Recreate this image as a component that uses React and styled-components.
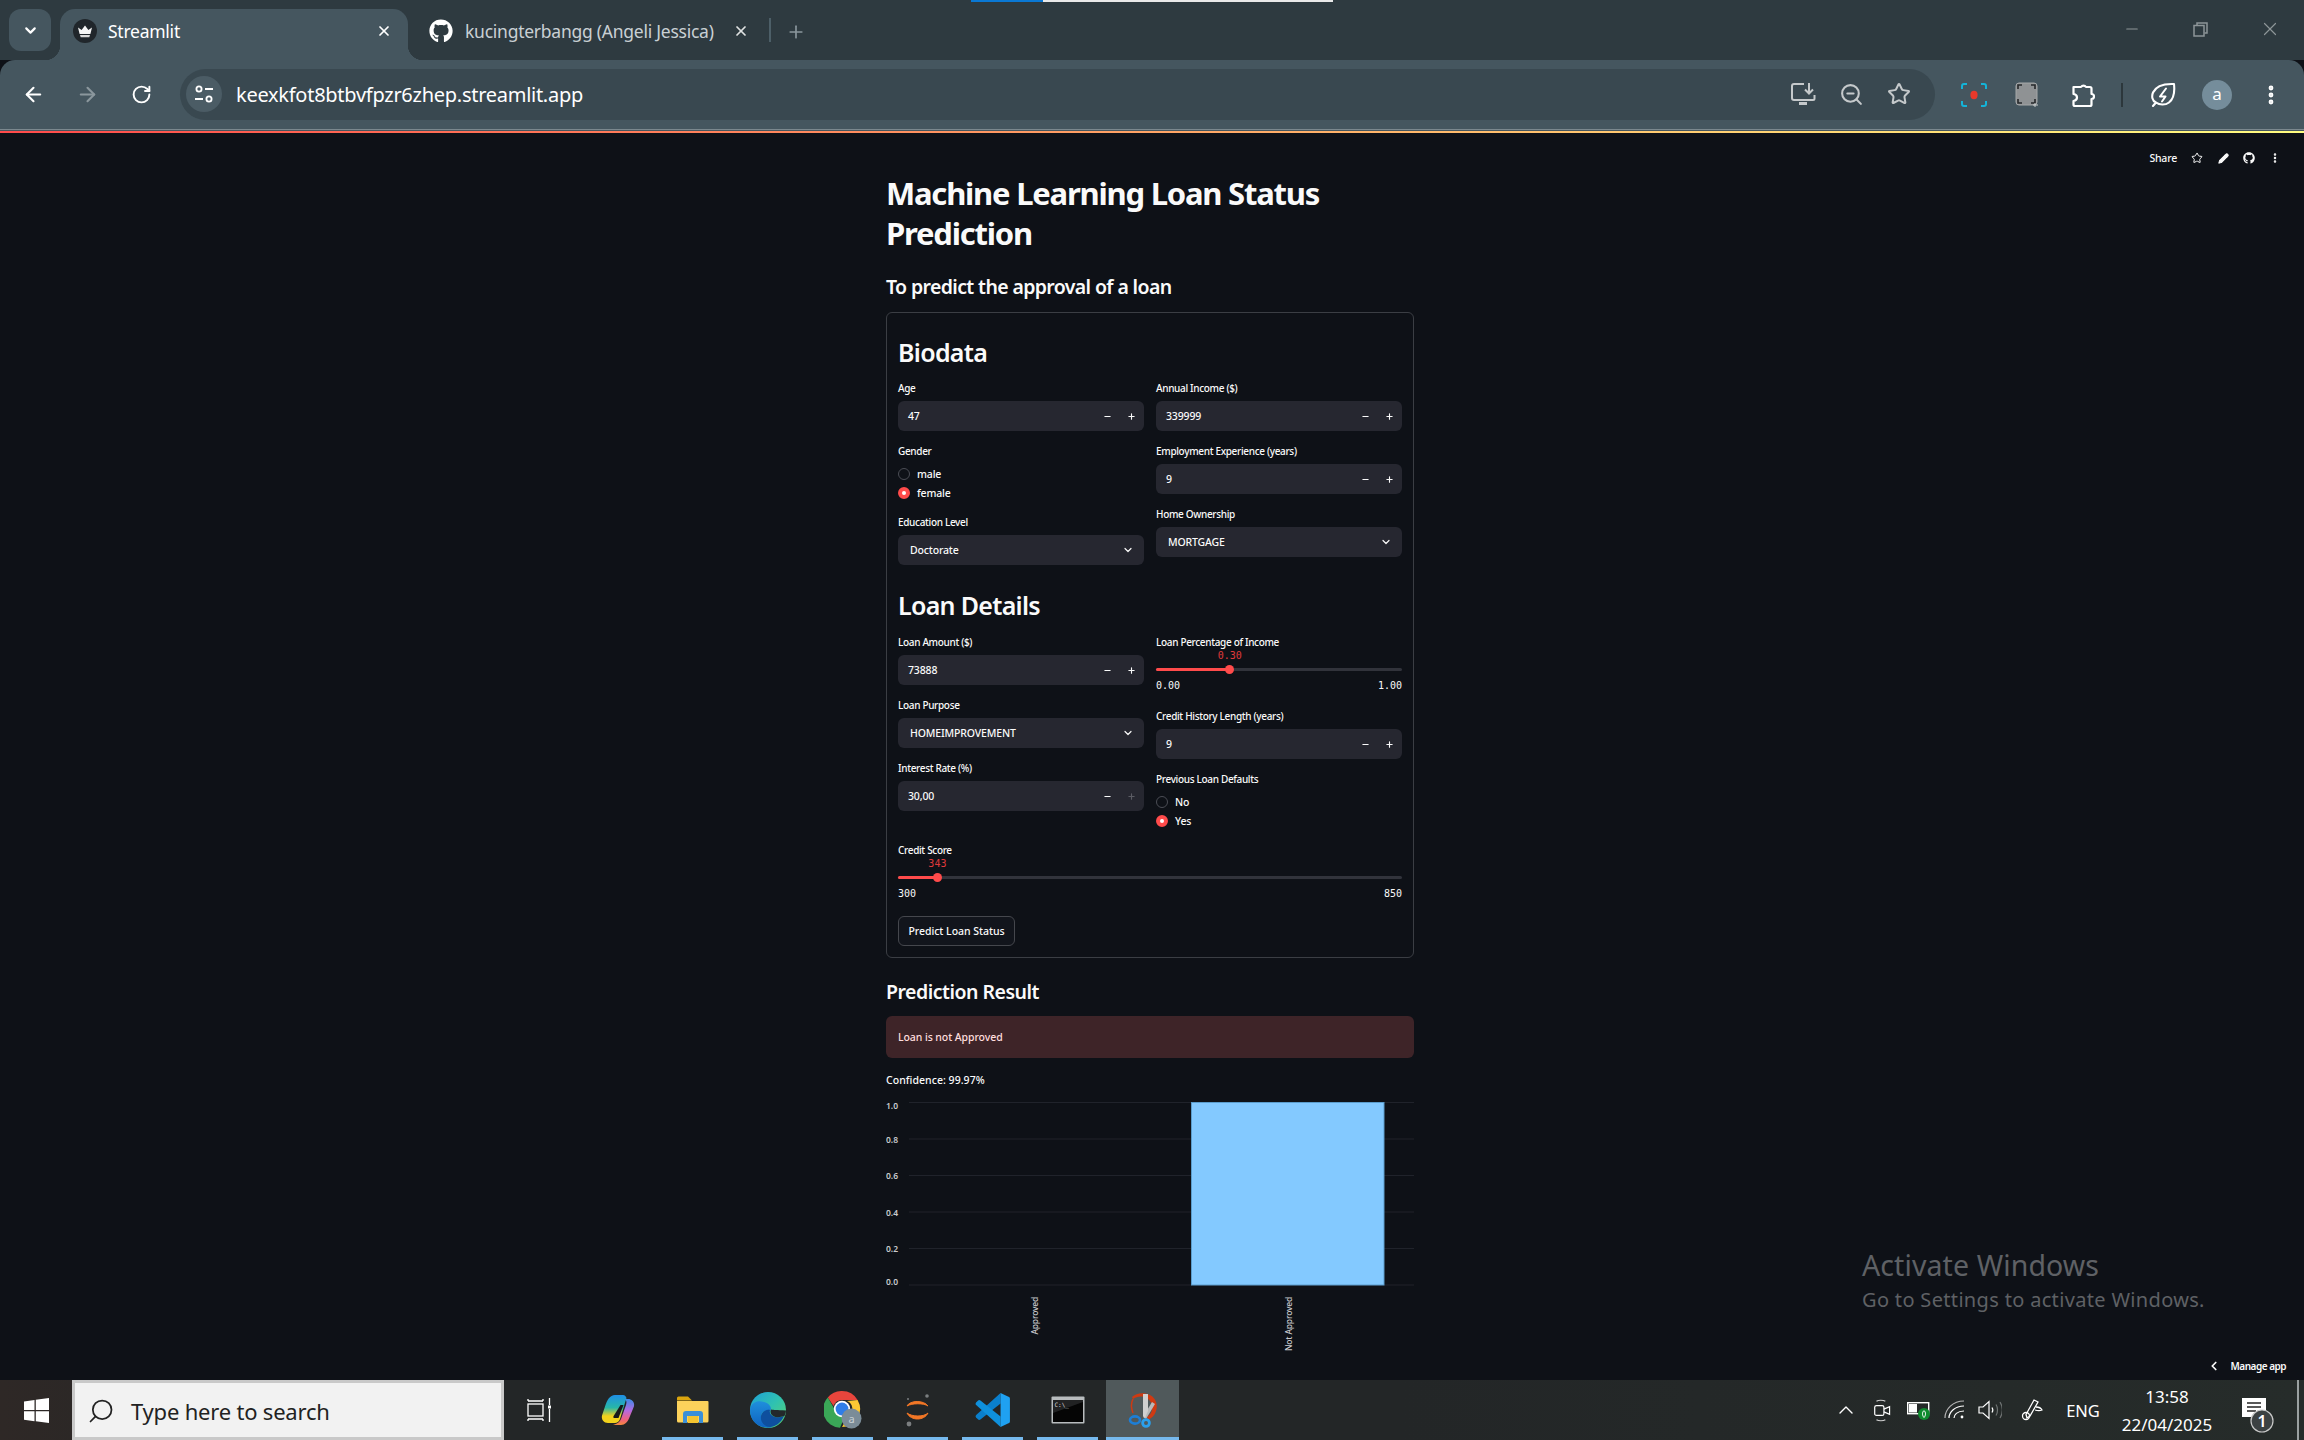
import React from 'react';
import styled, { createGlobalStyle } from 'styled-components';
import { ArrowLeft, ArrowRight, RotateCw, Star, ZoomOut, X, Plus, Minus, ChevronDown, ChevronLeft, ChevronUp, Pencil, EllipsisVertical, Search } from 'lucide-react';
import { FaGithub } from 'react-icons/fa';

const GlobalStyle = createGlobalStyle`
  html, body { margin: 0; padding: 0; background: #0e1117; }
  * { box-sizing: border-box; }
  #root { width: 2304px; height: 1440px; overflow: hidden; }
`;

const UI_FONT = `"Noto Sans", "Open Sans", sans-serif`;
const APP_FONT = `"Noto Sans", "Open Sans", sans-serif`;
const MONO_FONT = `"DejaVu Sans Mono", "Liberation Mono", monospace`;

const Shell = styled.div`
  position: relative;
  width: 2304px;
  height: 1440px;
  display: flex;
  flex-direction: column;
  font-family: ${UI_FONT};
`;

const CaptureBar = styled.div`
  position: absolute;
  top: 0;
  left: 971px;
  width: 362px;
  height: 2px;
  background: linear-gradient(90deg, #0a78d4 0 72px, #e9e9e9 72px);
`;

/* browser chrome */
const TabStrip = styled.div`
  height: 60px;
  background: #2e3a40;
  display: flex;
  align-items: flex-end;
  padding-left: 9px;
`;

const TabSearch = styled.div`
  width: 42px;
  height: 42px;
  margin-bottom: 9px;
  margin-right: 9px;
  border-radius: 12px;
  background: #45565f;
  color: #fff;
  display: flex;
  align-items: center;
  justify-content: center;
`;

const Tab = styled.div`
  position: relative;
  width: ${p => p.$w}px;
  height: 51px;
  padding: 0 ${p => p.$right}px 8px ${p => p.$left}px;
  display: flex;
  align-items: center;
  gap: ${p => p.$gap}px;
  font-size: 17.5px;
  letter-spacing: -0.25px;
  color: ${p => (p.$active ? '#fff' : '#c9d0d4')};
  background: ${p => (p.$active ? '#45565f' : 'transparent')};
  border-radius: 15px 15px 0 0;

  ${p => p.$active && `
    &::before, &::after {
      content: '';
      position: absolute;
      bottom: 0;
      width: 15px;
      height: 15px;
    }
    &::before { left: -15px; background: radial-gradient(circle at 0 0, transparent 15px, #45565f 15.5px); }
    &::after { right: -15px; background: radial-gradient(circle at 100% 0, transparent 15px, #45565f 15.5px); }
  `}
`;

const TabTitle = styled.span`
  flex: 1;
  white-space: nowrap;
`;

const TabClose = styled.span`
  display: flex;
  color: #fff;
  opacity: ${p => (p.$dim ? 0.85 : 1)};
`;

const TabDivider = styled.div`
  width: 2px;
  height: 24px;
  margin-bottom: 18px;
  background: #4d5f68;
`;

const NewTab = styled.div`
  width: 50px;
  margin-bottom: 18px;
  display: flex;
  justify-content: center;
  color: #8a969c;
`;

const WindowControls = styled.div`
  margin-left: auto;
  display: flex;
  align-self: flex-start;
  color: #8d9598;
`;

const WindowButton = styled.div`
  width: 69px;
  height: 58px;
  display: flex;
  align-items: center;
  justify-content: center;
`;

const Toolbar = styled.div`
  height: 70px;
  background: #45565f;
  border-bottom: 1px solid #7b888e;
  border-radius: 15px 15px 0 0;
  padding-left: 6px;
  display: flex;
  align-items: center;
  color: #fff;
`;

const Decoration = styled.div`
  height: 3px;
  border-top: 1px solid #45565f;
  background: linear-gradient(90deg, #ff4b4b, #fffd80);
`;

const NavButton = styled.div`
  width: ${p => p.$w || 54}px;
  height: 50px;
  flex: none;
  display: flex;
  align-items: center;
  justify-content: center;
  color: ${p => (p.$dim ? '#8b979d' : '#fff')};
`;

const Omnibox = styled.div`
  width: 1755px;
  height: 51px;
  margin: 0 12px 1px 12px;
  padding: 0 12px 0 6px;
  border-radius: 26px;
  background: #394850;
  display: flex;
  align-items: center;
  flex: none;
`;

const SiteInfo = styled.div`
  width: 36px;
  height: 36px;
  border-radius: 50%;
  background: #4b5c65;
  display: flex;
  align-items: center;
  justify-content: center;
`;

const UrlText = styled.span`
  margin-left: 14px;
  flex: 1;
  font-size: 20px;
  letter-spacing: -0.27px;
  color: #fff;
`;

const OmniAction = styled.div`
  width: 48px;
  display: flex;
  justify-content: center;
  color: #c5c9cb;
`;

const ToolbarRule = styled.div`
  width: 2px;
  height: 24px;
  margin: 0 13px 0 12px;
  background: #2c373c;
`;

const Avatar = styled.div`
  width: 30px;
  height: 30px;
  border-radius: 50%;
  background: #758d9b;
  color: #fff;
  font-size: 17px;
  line-height: 28px;
  text-align: center;
`;

/* streamlit page */
const Page = styled.main`
  position: relative;
  flex: 1;
  min-height: 0;
  overflow: hidden;
  background: #0e1117;
  padding: 40px 4px 0 0;
  font-family: ${APP_FONT};
  color: #fafafa;
`;

const Column = styled.div`
  width: 528px;
  margin: 0 auto;
`;

const Title = styled.h1`
  margin: 0;
  font-size: 31px;
  line-height: 40px;
  font-weight: 700;
  letter-spacing: -1.22px;
`;

const Subtitle = styled.h3`
  margin: 21px 0 12px;
  font-size: 19.5px;
  line-height: 26px;
  font-weight: 600;
  letter-spacing: -0.63px;
`;

const Card = styled.div`
  border: 1px solid #3b3e44;
  border-radius: 6px;
  padding: 11px;
  display: flex;
  flex-direction: column;
  gap: 12px;
`;

const SectionHeading = styled.h2`
  margin: ${p => (p.$nudge ? '1px' : '0')} 0 0;
  height: 44px;
  padding-top: ${p => (p.$nudge ? 11 : 12)}px;
  font-size: 25px;
  line-height: 32px;
  font-weight: 600;
  letter-spacing: -0.7px;
`;

const FieldGrid = styled.div`
  display: grid;
  grid-template-columns: 246px 246px;
  gap: 12px;
  align-items: start;
`;

const FieldStack = styled.div`
  display: flex;
  flex-direction: column;
  gap: 12px;
`;

const FieldLabel = styled.div`
  height: 18px;
  margin-bottom: 3px;
  font-size: 10px;
  font-weight: 500;
  line-height: 16px;
  letter-spacing: -0.33px;
  color: #fafafa;
  white-space: nowrap;
`;

const Control = styled.div`
  height: 30px;
  padding-right: 1px;
  border-radius: 6px;
  background: #262730;
  display: flex;
  align-items: center;
  font-size: 10.5px;
  font-weight: 500;
  letter-spacing: -0.15px;
  color: #fafafa;
`;

const NumberValue = styled.span`
  flex: 1;
  padding-left: 10px;
`;

const Stepper = styled.span`
  width: 24px;
  display: flex;
  justify-content: center;
  color: ${p => (p.$off ? '#5b5c64' : '#fafafa')};
`;

const SelectValue = styled.span`
  flex: 1;
  padding-left: 12px;
`;

const SelectArrow = styled.span`
  width: 27px;
  display: flex;
  justify-content: center;
  padding-right: 3px;
`;

const RadioRow = styled.div`
  height: 19px;
  padding-top: 1px;
  display: flex;
  align-items: center;
  gap: 7px;
  font-size: 10.5px;
  font-weight: 500;
  letter-spacing: -0.15px;
`;

const RadioDot = styled.span`
  width: 12px;
  height: 12px;
  margin-top: -1px;
  border-radius: 50%;
  background: ${p => (p.$on ? '#ff4b4b' : '#0e1117')};
  border: ${p => (p.$on ? '4px solid #ff4b4b' : '1px solid #4b4d55')};
  display: block;
  position: relative;

  ${p => p.$on && `
    &::after {
      content: '';
      position: absolute;
      inset: 0;
      border-radius: 50%;
      background: #fff;
    }
  `}
`;

const SliderBlock = styled.div`
  height: 62px;
`;

const Rail = styled.div`
  position: relative;
  height: 3px;
  margin-top: 16px;
  border-radius: 2px;
  background: #31333b;
`;

const RailFill = styled.div`
  height: 100%;
  border-radius: 2px;
  background: #ff4b4b;
`;

const Thumb = styled.div`
  position: absolute;
  top: -3px;
  width: 9px;
  height: 9px;
  margin-left: -4.5px;
  border-radius: 50%;
  background: #ff4b4b;
`;

const ThumbValue = styled.div`
  position: absolute;
  top: -19px;
  transform: translateX(-50%);
  font-family: ${MONO_FONT};
  font-size: 10px;
  line-height: 14px;
  color: #e03a3c;
`;

const TickRow = styled.div`
  display: flex;
  justify-content: space-between;
  margin-top: 8px;
  font-family: ${MONO_FONT};
  font-size: 10px;
  line-height: 14px;
  color: #fafafa;
`;

const PredictButton = styled.button`
  align-self: flex-start;
  width: 117px;
  height: 30px;
  padding: 0;
  border: 1px solid #45474d;
  border-radius: 6px;
  background: #12151c;
  color: #fafafa;
  font-family: ${APP_FONT};
  font-size: 10.5px;
  font-weight: 500;
  letter-spacing: -0.03px;
`;

const ResultHeading = styled.h3`
  margin: 21px 0 11px;
  font-size: 19.5px;
  line-height: 26px;
  font-weight: 600;
  letter-spacing: -0.5px;
`;

const ErrorAlert = styled.div`
  height: 42px;
  padding-left: 12px;
  border-radius: 6px;
  background: #3e2428;
  color: #ffdede;
  display: flex;
  align-items: center;
  font-size: 10.5px;
  font-weight: 500;
  letter-spacing: -0.08px;
`;

const Confidence = styled.p`
  margin: 14px 0 0;
  font-size: 10.5px;
  font-weight: 500;
  line-height: 16px;
  letter-spacing: 0.04px;
`;

const ChartFrame = styled.svg`
  display: block;
  width: 528px;
  height: 268px;
  margin-top: 4px;
  font-family: ${APP_FONT};
`;

const ViewerBadge = styled.div`
  position: absolute;
  top: 18px;
  right: 16px;
  height: 14px;
  display: flex;
  align-items: center;
  font-size: 10.5px;
  letter-spacing: -0.2px;
  font-weight: 500;
  color: #fafafa;
`;

const BadgeIcon = styled.span`
  width: 26px;
  display: flex;
  justify-content: center;
  margin-left: ${p => p.$first ? 7 : 0}px;
`;

const ManageApp = styled.div`
  position: absolute;
  right: 18px;
  bottom: 7px;
  display: flex;
  align-items: center;
  gap: 10px;
  font-size: 10px;
  font-weight: 600;
  letter-spacing: -0.5px;
  color: #fafafa;
`;

const Watermark = styled.div`
  position: absolute;
  left: 1862px;
  top: 1114px;
  color: #5f6165;
`;

const WatermarkTitle = styled.div`
  font-size: 28.5px;
  line-height: 36px;
  letter-spacing: 0.1px;
`;

const WatermarkNote = styled.div`
  font-size: 20px;
  line-height: 33px;
  letter-spacing: 0.33px;
`;

/* windows taskbar */
const Taskbar = styled.footer`
  height: 60px;
  display: flex;
  background: linear-gradient(90deg, #2e2826 0, #232627 400px, #232627 1400px, #262c2a 2304px);
  color: #fff;
`;

const StartButton = styled.div`
  width: 72px;
  display: flex;
  align-items: center;
  justify-content: center;
`;

const SearchBox = styled.div`
  width: 432px;
  display: flex;
  align-items: center;
  gap: 16px;
  padding: 2px 0 0 12px;
  background: #f2f2f2;
  border: 3px solid #c9c9c9;
  color: #222;
  font-size: 22px;
  letter-spacing: -0.2px;
`;

const TaskViewCell = styled.div`
  width: 76px;
  padding-right: 6px;
  display: flex;
  align-items: center;
  justify-content: center;
`;

const AppCell = styled.div`
  position: relative;
  width: 75px;
  display: flex;
  align-items: center;
  justify-content: center;
  padding-bottom: 1px;

  ${p => p.$active && `
    &::before {
      content: '';
      position: absolute;
      inset: 0 1px;
      background: #50595b;
    }
  `}

  ${p => p.$open && `
    &::after {
      content: '';
      position: absolute;
      bottom: 0;
      left: ${p.$active ? 1 : 7}px;
      right: ${p.$active ? 1 : 7}px;
      height: 3px;
      background: #76b9ed;
    }
  `}

  & > svg { position: relative; z-index: 1; }
`;

const Tray = styled.div`
  margin-left: auto;
  display: flex;
  height: 100%;
`;

const TrayCell = styled.div`
  width: ${p => p.$w}px;
  display: flex;
  align-items: center;
  justify-content: center;
  font-size: ${p => p.$fs || 16}px;
`;

const Clock = styled.div`
  width: 116px;
  text-align: center;
  font-size: 17px;
  line-height: 28px;
  padding-top: 3px;
`;

const ShowDesktop = styled.div`
  width: 19px;
  display: flex;
  justify-content: flex-end;
  padding-right: 5px;

  &::after {
    content: '';
    width: 2px;
    height: 100%;
    background: #9aa0a0;
  }
`;

/* drawn icons */
const CrownIcon = () => (
  <svg width="24" height="24" viewBox="0 0 24 24">
    <circle cx="12" cy="12" r="12" fill="#20262b" />
    <path d="M5 8.5l3.6 2.6L12 6.5l3.4 4.6L19 8.5l-1.6 6.5H6.6z" fill="#f6f6f6" />
    <path d="M7 16h10l-.7 2.2H7.7z" fill="#d9d9d9" />
  </svg>
);

const SiteTuneIcon = () => (
  <svg width="22" height="22" viewBox="0 0 22 22" fill="none" stroke="#fff" strokeWidth="1.8">
    <circle cx="6" cy="6" r="2.6" />
    <path d="M12 6h8M2 16h8" />
    <circle cx="16" cy="16" r="2.6" />
  </svg>
);

const InstallIcon = () => (
  <svg width="26" height="24" viewBox="0 0 26 24" fill="none" stroke="#c5c9cb" strokeWidth="2">
    <path d="M14 2H4a2 2 0 0 0-2 2v12a2 2 0 0 0 2 2h19a1.5 1.5 0 0 0 1.5-1.5V13" />
    <path d="M9 21.5h8" strokeWidth="3" />
    <path d="M19 1v10M15 7.5l4 4 4-4" />
  </svg>
);

const RecordIcon = () => (
  <svg width="26" height="24" viewBox="0 0 26 24" fill="none" stroke="#14b4d8" strokeWidth="2">
    <path d="M1 6V3a2 2 0 0 1 2-2h3M20 1h3a2 2 0 0 1 2 2v3M25 18v3a2 2 0 0 1-2 2h-3M6 23H3a2 2 0 0 1-2-2v-3" />
    <ellipse cx="13" cy="12" rx="3.6" ry="4.2" fill="#e8392b" stroke="none" />
  </svg>
);

const CaptureIcon = () => (
  <svg width="26" height="26" viewBox="0 0 26 26">
    <rect x="1" y="1" width="21" height="22" rx="3" fill="#8f9294" stroke="#a5a7a8" />
    <path d="M3 7V3h4M16 3h4v4M20 17v4h-4M7 21H3v-4" fill="none" stroke="#26292b" strokeWidth="1.6" />
    <path d="M20 21v4M18 23h5" stroke="#c9cccd" strokeWidth="1" />
  </svg>
);

const PuzzleIcon = () => (
  <svg width="26" height="26" viewBox="-2 0 26 26" fill="none" stroke="#fff" strokeWidth="2.2" strokeLinejoin="round">
    <path d="M2.500 5H10a3 3 0 0 1 5 0h4a1.500 1.500 0 0 1 1.500 1.500V12a2.500 2.500 0 0 1 0 5v5.500A1.500 1.500 0 0 1 19 24H4a1.500 1.500 0 0 1-1.500-1.500V19c3-.6 3.500-2 3.500-3.500S5.500 12.500 2.500 12z" />
  </svg>
);

const LeafBoltIcon = () => (
  <svg width="26" height="26" viewBox="0 0 26 26" fill="none" stroke="#fff" strokeWidth="2.100" strokeLinejoin="round" strokeLinecap="round">
    <path d="M6 20.500C2 19 1.500 14 3 10.500 5.500 5 13 1.500 24 2c1 9-.5 15-5 18.500-4 3-9.500 2.500-13 0-1 1-2 2.500-3 3.500" />
    <path d="M16 6.500l-6 8h5.500l-3.500 5" strokeWidth="2" />
  </svg>
);

const WindowsLogo = () => (
  <svg width="25" height="25" viewBox="0 0 25 25" fill="#fff">
    <path d="M0 3.500l10.500-1.500v10H0zM11.800 1.800L25 0v12H11.800zM0 13.200h10.500v10L0 21.700zM11.800 13.200H25V25l-13.200-1.800z" />
  </svg>
);

const TaskViewIcon = () => (
  <svg width="24" height="24" viewBox="0 0 24 24" fill="none" stroke="#fff" strokeWidth="1.300">
    <path d="M1 3h15M1 1v2M16 1v2M1 21h15M1 23v-2M16 23v-2" />
    <rect x="1" y="6" width="15" height="12" />
    <path d="M22.500 0v7M22.500 11v13" />
    <rect x="21" y="7.500" width="3" height="3" fill="#fff" stroke="none" />
  </svg>
);

const CopilotIcon = () => (
  <svg width="34" height="32" viewBox="0 0 34 32">
    <defs>
      <linearGradient id="copL" x1="0" y1="0" x2="0" y2="1">
        <stop offset="0" stopColor="#1f8fe6" />
        <stop offset=".45" stopColor="#27b7a8" />
        <stop offset=".75" stopColor="#f2d21c" />
      </linearGradient>
      <linearGradient id="copR" x1="0" y1="0" x2="0" y2="1">
        <stop offset="0" stopColor="#3a8ce8" />
        <stop offset=".45" stopColor="#b56ae0" />
        <stop offset=".8" stopColor="#f0627a" />
        <stop offset="1" stopColor="#f48a3c" />
      </linearGradient>
    </defs>
    <path d="M14 1h8c2 0 3 1.500 3.500 3L19 25c-.8 2.500-3 4-5 4H7c-4 0-7-3.500-6-7.500l3-9C6 6 9 1 14 1z" fill="url(#copL)" />
    <path d="M12 31h8c4 0 6.500-3 8-6.500l4.500-11C34.500 9 31.500 5 27 5h-3c2 2 1.500 4 1 6l-5 14c-1 3-4 5-8 6z" fill="url(#copR)" />
    <path d="M19.500 11h3l-5 13h-4c-1 0-1.500-.8-1-1.800z" fill="#17191b" />
  </svg>
);

const FolderIcon = () => (
  <svg width="32" height="28" viewBox="0 0 32 28">
    <path d="M0 2a1.500 1.500 0 0 1 1.500-1.500H11l4 4h-15z" fill="#dba50e" />
    <path d="M0 5h30.500a1 1 0 0 1 1 1v19a1.500 1.500 0 0 1-1.500 1.500H1.500A1.500 1.500 0 0 1 0 25z" fill="#fcd25b" />
    <path d="M6 27v-9a3 3 0 0 1 3-3h14a3 3 0 0 1 3 3v9h-4v-7H10v7z" fill="#3a8fd8" />
    <rect x="11" y="20" width="10" height="7" fill="#f4c430" />
  </svg>
);

const EdgeIcon = () => (
  <svg width="36" height="36" viewBox="0 0 36 36">
    <defs>
      <linearGradient id="edgeA" x1="0" y1="0" x2="1" y2="1">
        <stop offset="0" stopColor="#1d9fd8" />
        <stop offset=".5" stopColor="#30c2b0" />
        <stop offset="1" stopColor="#5ed468" />
      </linearGradient>
      <linearGradient id="edgeB" x1="0" y1="0" x2="0" y2="1">
        <stop offset="0" stopColor="#1f8fdc" />
        <stop offset="1" stopColor="#0f62c0" />
      </linearGradient>
    </defs>
    <circle cx="18" cy="18" r="18" fill="url(#edgeA)" />
    <path d="M0 18C1 10 8 8 14 10c7 2 8 7 6 9-4-1-9 0-9 6 0 4 4 9 12 10C10 38 0 30 0 18z" fill="url(#edgeB)" />
    <path d="M20 18c-1 3 1 6 5 7 3 .6 6 0 9-1-3 7-9 11-14 11-6-1-10-5-9-11 1-5 6-7 9-6z" fill="#0e4f9e" />
    <path d="M21 17.500c3 .5 5 .5 15 1-.2 2-.6 3.500-1.500 5.500-3 1-6 1.500-9 1-4-1-6-4.500-4.500-7.500z" fill="#23282a" />
  </svg>
);

const ChromeIcon = () => (
  <svg width="38" height="38" viewBox="0 0 38 38">
    <path d="M18 0a18 18 0 0 1 15.600 9H18a9 9 0 0 0-8.500 6L3.800 6.500A18 18 0 0 1 18 0z" fill="#e8453c" />
    <path d="M3.800 6.500 L11 19a8 8 0 0 0 10 6l-5 11.800A18 18 0 0 1 3.800 6.500z" fill="#3aa757" />
    <path d="M33.600 9A18 18 0 0 1 18 36l7-12a8 8 0 0 0-2-14z" fill="#fcc934" />
    <circle cx="18" cy="18" r="8.200" fill="#fff" />
    <circle cx="18" cy="18" r="6.400" fill="#2f7de8" />
    <circle cx="27.500" cy="27.500" r="10" fill="#7b8c98" />
    <text x="27.500" y="31.500" textAnchor="middle" fontSize="11" fill="#c8d0d5" fontFamily={UI_FONT}>a</text>
  </svg>
);

const JupyterIcon = () => (
  <svg width="28" height="34" viewBox="0 0 28 34">
    <path d="M3 13C6 7 20 7 24 13 20 10 8 10 3 13z" fill="#f37726" stroke="#f37726" />
    <path d="M3 20C8 24 20 24 24 20 20 28 7 28 3 20z" fill="#f37726" stroke="#f37726" />
    <circle cx="23" cy="3" r="1.800" fill="#7b7e80" />
    <circle cx="5" cy="31" r="2.400" fill="#7b7e80" />
    <circle cx="4" cy="6" r="1" fill="#7b7e80" />
  </svg>
);

const VsCodeIcon = () => (
  <svg width="36" height="36" viewBox="0 0 100 100">
    <path d="M71 3 4 63c-3 3-3 5-1 8l5 5c2 2 5 2 8 0L71 32z" fill="#0a7fcc" />
    <path d="M71 97 4 37c-3-3-3-5-1-8l5-5c2-2 5-2 8 0L71 68z" fill="#0f90dc" />
    <path d="M71 3l22 10c3 1 4 3 4 6v62c0 3-1 5-4 6L71 97z" fill="#1fa1f1" />
  </svg>
);

const TerminalIcon = () => (
  <svg width="34" height="28" viewBox="0 0 34 28">
    <rect x="0.500" y="0.500" width="33" height="27" rx="1" fill="#b8bcbe" />
    <rect x="2" y="4" width="30" height="22" fill="#050505" />
    <path d="M2 17L32 6V4H2z" fill="#2d2f31" opacity=".7" />
    <text x="3.500" y="11" fontSize="6" fill="#d8d8d8" fontFamily={MONO_FONT}>C:\_</text>
  </svg>
);

const SnipIcon = () => (
  <svg width="30" height="36" viewBox="0 0 30 36">
    <path d="M4 5C8 1 16 0 22 3c6 3 8 10 6 16-1 4-4 7-8 9l-1-3c3-2 5-5 5-8 1-6-3-11-8-12-4-1-8 0-11 2z" fill="#cf3a12" />
    <path d="M5 7C3 11 3 16 5 21" fill="none" stroke="#cf3a12" strokeWidth="1.500" />
    <path d="M27 12l-9 15-3-2 9-15z" fill="#b9b9b9" />
    <path d="M15 2h5v17l-3 7-2-2z" fill="#d0d0d0" />
    <ellipse cx="7" cy="28" rx="5" ry="3.600" fill="none" stroke="#1d7ed6" strokeWidth="2.600" />
    <circle cx="18" cy="31" r="3.400" fill="none" stroke="#2ba0ec" strokeWidth="2.800" />
  </svg>
);

const MeetIcon = () => (
  <svg width="17" height="23" viewBox="0 0 24 32" fill="none" stroke="#fff" strokeWidth="1.700">
    <rect x="1" y="9" width="13" height="14" rx="2.500" />
    <path d="M14 14l8-3.500v11L14 18" />
    <path d="M3.500 3C6 1 13 1 16 3M3.500 29c3 2 9.500 2 12.500 0" stroke="#cfcfcf" />
  </svg>
);

const BatteryIcon = () => (
  <svg width="24" height="20" viewBox="0 0 24 20">
    <rect x="0.700" y="2.700" width="21" height="11" fill="none" stroke="#fff" strokeWidth="1.400" />
    <rect x="2" y="4" width="8" height="8.500" fill="#fff" />
    <circle cx="17" cy="14" r="6" fill="#0f8a2e" />
    <path d="M17 10.500c2 1.500 2 5 0 7-2-2-2-5.500 0-7z" fill="none" stroke="#fff" strokeWidth="1" />
  </svg>
);

const WifiIcon = () => (
  <svg width="22" height="20" viewBox="0 0 22 20" fill="none" stroke="#fff" strokeWidth="1.200">
    <path d="M1 18C1 9 9 1 20 1" stroke="#b5b5b5" />
    <path d="M5 18c0-6 6-12 15-12" />
    <path d="M10 18c0-3 3-7 10-7" />
    <circle cx="18" cy="17" r="1.400" fill="#fff" stroke="none" />
  </svg>
);

const VolumeIcon = () => (
  <svg width="24" height="20" viewBox="0 0 24 20" fill="none" stroke="#fff" strokeWidth="1.200">
    <path d="M1 7v6h4l6 5.500V1.500L5 7z" />
    <path d="M14 7.500c1 1.500 1 3.500 0 5" />
    <path d="M18 4.500c2 3 2 8 0 11M22 2c3 5 3 11 0 16" stroke="#6f7373" />
  </svg>
);

const PenIcon = () => (
  <svg width="22" height="22" viewBox="0 0 22 22" fill="none" stroke="#fff" strokeWidth="1.300">
    <path d="M13 1l4 2-8 14-3 2-1-3.500z" />
    <circle cx="5" cy="17" r="3.500" />
    <path d="M15 8c3 0 5 1 6 3-2 1-4 1-7 0" />
  </svg>
);

const NoticeIcon = () => (
  <svg width="38" height="46" viewBox="0 0 38 46">
    <path d="M6 11h24v19H19l-3 3v-3H6z" fill="#fff" />
    <path d="M11 16h14M11 20h14M11 24h9" stroke="#222" strokeWidth="1.300" />
    <circle cx="26" cy="34" r="11" fill="#3c4142" stroke="#c9c9c9" strokeWidth="1.200" />
    <text x="26" y="40" textAnchor="middle" fontSize="16" fontWeight="600" fill="#fff" fontFamily={UI_FONT}>1</text>
  </svg>
);

const NumberField = ({ label, value, plusOff }) => (
  <div>
    <FieldLabel>{label}</FieldLabel>
    <Control>
      <NumberValue>{value}</NumberValue>
      <Stepper><Minus size={9} strokeWidth={3} /></Stepper>
      <Stepper $off={plusOff}><Plus size={9} strokeWidth={3} /></Stepper>
    </Control>
  </div>
);

const SelectField = ({ label, value }) => (
  <div>
    <FieldLabel>{label}</FieldLabel>
    <Control>
      <SelectValue>{value}</SelectValue>
      <SelectArrow><ChevronDown size={12} strokeWidth={2.4} /></SelectArrow>
    </Control>
  </div>
);

const RadioField = ({ label, options, selected }) => (
  <div>
    <FieldLabel>{label}</FieldLabel>
    {options.map(o => (
      <RadioRow key={o}>
        <RadioDot $on={o === selected} />
        {o}
      </RadioRow>
    ))}
  </div>
);

const SliderField = ({ label, min, max, value, format }) => {
  const pct = ((value - min) / (max - min)) * 100;
  return (
    <SliderBlock>
      <FieldLabel>{label}</FieldLabel>
      <Rail>
        <RailFill style={{ width: `${pct}%` }} />
        <Thumb style={{ left: `${pct}%` }} />
        <ThumbValue style={{ left: `${pct}%` }}>{format(value)}</ThumbValue>
      </Rail>
      <TickRow>
        <span>{format(min)}</span>
        <span>{format(max)}</span>
      </TickRow>
    </SliderBlock>
  );
};

const ticks = [
  { label: '1.0', y: 10.5, text: 14 },
  { label: '0.8', y: 47, text: 47.5 },
  { label: '0.6', y: 83.5, text: 84 },
  { label: '0.4', y: 120, text: 120.5 },
  { label: '0.2', y: 156.5, text: 157 },
  { label: '0.0', y: 193, text: 189.5 },
];

const LoanChart = () => (
  <ChartFrame viewBox="0 0 528 268">
    {ticks.map(t => (
      <g key={t.label}>
        <line x1="23" x2="528" y1={t.y} y2={t.y} stroke="#20232b" strokeWidth="1" />
        <text x="0" y={t.text + 3} fontSize="8.500" fontWeight="600" fill="#c9cace">{t.label}</text>
      </g>
    ))}
    <rect x="305.500" y="10.500" width="192.500" height="182.500" fill="#83c9ff" stroke="#5a9ccc" strokeWidth="1" />
    <text transform="translate(152 205) rotate(-90)" textAnchor="end" fontSize="8.500" fontWeight="500" fill="#c9cace" letterSpacing="-0.2">Approved</text>
    <text transform="translate(405.500 205) rotate(-90)" textAnchor="end" fontSize="8.500" fontWeight="500" fill="#c9cace" letterSpacing="-0.2">Not Approved</text>
  </ChartFrame>
);

const App = () => (
  <Shell>
    <GlobalStyle />
    <CaptureBar />
    <TabStrip>
      <TabSearch><ChevronDown size={17} strokeWidth={3} /></TabSearch>
      <Tab $active $w={348} $left={13} $right={16} $gap={11}>
        <CrownIcon />
        <TabTitle>Streamlit</TabTitle>
        <TabClose><X size={16} strokeWidth={2.6} /></TabClose>
      </Tab>
      <Tab $w={361} $left={21} $right={20} $gap={12}>
        <FaGithub size={24} color="#fff" />
        <TabTitle>kucingterbangg (Angeli Jessica)</TabTitle>
        <TabClose $dim><X size={16} strokeWidth={2.6} /></TabClose>
      </Tab>
      <TabDivider />
      <NewTab><Plus size={20} strokeWidth={2} /></NewTab>
      <WindowControls>
        <WindowButton><Minus size={18} strokeWidth={1.5} /></WindowButton>
        <WindowButton>
          <svg width="15" height="15" viewBox="0 0 15 15" fill="none" stroke="currentColor" strokeWidth="1.500">
            <rect x="1" y="3.500" width="10" height="10.500" />
            <path d="M4 3V1h10v10h-2.500" />
          </svg>
        </WindowButton>
        <WindowButton><X size={22} strokeWidth={1.3} /></WindowButton>
      </WindowControls>
    </TabStrip>
    <Toolbar>
      <NavButton><ArrowLeft size={23} strokeWidth={2.2} /></NavButton>
      <NavButton $dim><ArrowRight size={23} strokeWidth={2.2} /></NavButton>
      <NavButton><RotateCw size={21} strokeWidth={2.2} /></NavButton>
      <Omnibox>
        <SiteInfo><SiteTuneIcon /></SiteInfo>
        <UrlText>keexkfot8btbvfpzr6zhep.streamlit.app</UrlText>
        <OmniAction><InstallIcon /></OmniAction>
        <OmniAction><ZoomOut size={25} strokeWidth={2} /></OmniAction>
        <OmniAction><Star size={24} strokeWidth={2} /></OmniAction>
      </Omnibox>
      <NavButton><RecordIcon /></NavButton>
      <NavButton><CaptureIcon /></NavButton>
      <NavButton><PuzzleIcon /></NavButton>
      <ToolbarRule />
      <NavButton><LeafBoltIcon /></NavButton>
      <NavButton><Avatar>a</Avatar></NavButton>
      <NavButton><EllipsisVertical size={24} strokeWidth={2.8} /></NavButton>
    </Toolbar>
    <Decoration />
    <Page>
      <ViewerBadge>
        Share
        <BadgeIcon $first><Star size={12} strokeWidth={2} /></BadgeIcon>
        <BadgeIcon><Pencil size={11} strokeWidth={2.4} fill="#fafafa" /></BadgeIcon>
        <BadgeIcon><FaGithub size={12} /></BadgeIcon>
        <BadgeIcon><EllipsisVertical size={12} strokeWidth={3} /></BadgeIcon>
      </ViewerBadge>
      <Column>
        <Title>Machine Learning Loan Status Prediction</Title>
        <Subtitle>To predict the approval of a loan</Subtitle>
        <Card>
          <SectionHeading>Biodata</SectionHeading>
          <FieldGrid>
            <FieldStack>
              <NumberField label="Age" value="47" />
              <RadioField label="Gender" options={['male', 'female']} selected="female" />
              <SelectField label="Education Level" value="Doctorate" />
            </FieldStack>
            <FieldStack>
              <NumberField label="Annual Income ($)" value="339999" />
              <NumberField label="Employment Experience (years)" value="9" />
              <SelectField label="Home Ownership" value="MORTGAGE" />
            </FieldStack>
          </FieldGrid>
          <SectionHeading $nudge>Loan Details</SectionHeading>
          <FieldGrid>
            <FieldStack>
              <NumberField label="Loan Amount ($)" value="73888" />
              <SelectField label="Loan Purpose" value="HOMEIMPROVEMENT" />
              <NumberField label="Interest Rate (%)" value="30,00" plusOff />
            </FieldStack>
            <FieldStack>
              <SliderField label="Loan Percentage of Income" min={0} max={1} value={0.3} format={v => v.toFixed(2)} />
              <NumberField label="Credit History Length (years)" value="9" />
              <RadioField label="Previous Loan Defaults" options={['No', 'Yes']} selected="Yes" />
            </FieldStack>
          </FieldGrid>
          <SliderField label="Credit Score" min={300} max={850} value={343} format={v => String(v)} />
          <PredictButton>Predict Loan Status</PredictButton>
        </Card>
        <ResultHeading>Prediction Result</ResultHeading>
        <ErrorAlert>Loan is not Approved</ErrorAlert>
        <Confidence>Confidence: 99.97%</Confidence>
        <LoanChart />
      </Column>
      <Watermark>
        <WatermarkTitle>Activate Windows</WatermarkTitle>
        <WatermarkNote>Go to Settings to activate Windows.</WatermarkNote>
      </Watermark>
      <ManageApp>
        <ChevronLeft size={14} strokeWidth={3} />
        Manage app
      </ManageApp>
    </Page>
    <Taskbar>
      <StartButton><WindowsLogo /></StartButton>
      <SearchBox>
        <Search size={28} strokeWidth={1.5} style={{ transform: 'scaleX(-1)' }} />
        Type here to search
      </SearchBox>
      <TaskViewCell><TaskViewIcon /></TaskViewCell>
      <AppCell><CopilotIcon /></AppCell>
      <AppCell $open><FolderIcon /></AppCell>
      <AppCell $open><EdgeIcon /></AppCell>
      <AppCell $open><ChromeIcon /></AppCell>
      <AppCell $open><JupyterIcon /></AppCell>
      <AppCell $open><VsCodeIcon /></AppCell>
      <AppCell $open><TerminalIcon /></AppCell>
      <AppCell $open $active><SnipIcon /></AppCell>
      <Tray>
        <TrayCell $w={36}><ChevronUp size={24} strokeWidth={1.4} /></TrayCell>
        <TrayCell $w={37}><MeetIcon /></TrayCell>
        <TrayCell $w={35}><BatteryIcon /></TrayCell>
        <TrayCell $w={37}><WifiIcon /></TrayCell>
        <TrayCell $w={34}><VolumeIcon /></TrayCell>
        <TrayCell $w={50}><PenIcon /></TrayCell>
        <TrayCell $w={52} $fs={16.5}>ENG</TrayCell>
        <Clock>13:58<br />22/04/2025</Clock>
        <TrayCell $w={60}><NoticeIcon /></TrayCell>
        <ShowDesktop />
      </Tray>
    </Taskbar>
  </Shell>
);

export default App;
